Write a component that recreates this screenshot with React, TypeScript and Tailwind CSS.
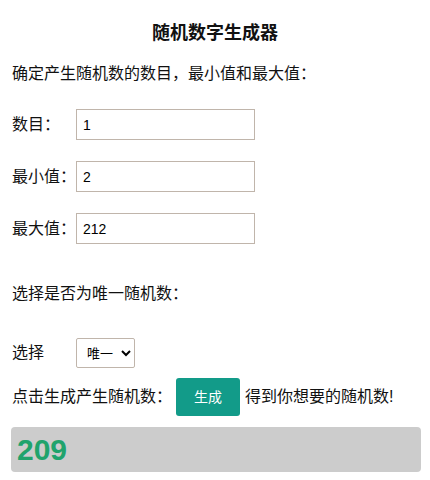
import { useState } from 'react';

const font = 'font-["Liberation_Sans","Noto_Sans_CJK_SC",sans-serif]';

function Field({ label, value }: { label: string; value: string }) {
    const [v, setV] = useState(value);
    return (
        <div className="flex items-center">
            <span className="w-[64px] shrink-0">{label}</span>
            <input
                value={v}
                onChange={(e) => setV(e.target.value)}
                className="w-[179px] h-[31px] border border-[#c0b5ab] px-[6px] text-[14px] text-black outline-none"
            />
        </div>
    );
}

export default function App() {
    const [mode, setMode] = useState('unique');
    return (
        <div className={`${font} px-3 text-base leading-6 text-[#111] bg-white min-h-[480px]`}>
            <h1 className="text-[18px] font-bold text-center pt-[21px] leading-6">随机数字生成器</h1>
            <p className="mt-[17px]">确定产生随机数的数目，最小值和最大值：</p>

            <div className="mt-[23px] flex flex-col gap-[21px]">
                <Field label="数目：" value="1" />
                <Field label="最小值：" value="2" />
                <Field label="最大值：" value="212" />
            </div>

            <p className="mt-[38px]">选择是否为唯一随机数：</p>

            <div className="mt-[32px] flex items-center">
                <span className="w-[64px] shrink-0">选择</span>
                <select
                    value={mode}
                    onChange={(e) => setMode(e.target.value)}
                    className="w-[59px] h-[30px] border border-[#c0b5ab] rounded-[2px] pl-[6px] text-[13px] text-black bg-white"
                >
                    <option value="unique">唯一</option>
                    <option value="repeat">可重复</option>
                </select>
            </div>

            <div className="mt-[10px] flex items-center">
                <span>点击生成产生随机数：</span>
                <button className="ml-1 w-[64px] h-[38px] rounded-[3px] bg-[#129b89] text-white text-[14px]">生成</button>
                <span className="ml-[5px]">得到你想要的随机数!</span>
            </div>

            <div className="mt-[11px] -ml-px w-[410px] h-[45px] rounded-[4px] bg-[#cccccc] flex items-center pl-[6px]">
                <span className="text-[30px] font-bold text-[#20a36c] leading-none">209</span>
            </div>
        </div>
    );
}
